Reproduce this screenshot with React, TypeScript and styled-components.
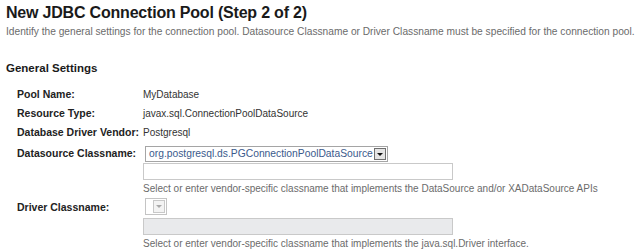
import React from "react";
import styled, { createGlobalStyle } from "styled-components";

const Global = createGlobalStyle`
  html, body { margin: 0; padding: 0; background: #fff; }
  body { font-family: "Liberation Sans", Arial, sans-serif; }
`;

const Page = styled.div`
  padding: 3px 6px 0 6px;
  width: 640px;
  box-sizing: border-box;
`;

const Title = styled.h1`
  margin: 0;
  font-size: 16px;
  letter-spacing: -0.2px;
  font-weight: bold;
  line-height: 20px;
  color: #1a1a1a;
`;

const Intro = styled.div`
  margin-top: 2px;
  font-size: 10.2px;
  line-height: 14px;
  color: #6b6b6b;
  white-space: nowrap;
`;

const Section = styled.h2`
  margin: 22px 0 0 0;
  font-size: 11.5px;
  font-weight: bold;
  line-height: 14px;
  color: #1a1a1a;
`;

const Rows = styled.div`
  margin-top: 10px;
  padding-left: 11px;
  display: flex;
  flex-direction: column;
`;

const Row = styled.div<{ $pad?: number }>`
  display: flex;
  align-items: flex-start;
  padding-top: ${(p) => p.$pad ?? 0}px;
`;

const Label = styled.div<{ $shift?: number }>`
  width: 126px;
  flex: none;
  font-size: 10.5px;
  font-weight: bold;
  line-height: 19px;
  color: #222;
  white-space: nowrap;
  margin-top: ${(p) => p.$shift ?? 0}px;
`;

const Value = styled.div`
  font-size: 10px;
  line-height: 19px;
  color: #333;
`;

const Field = styled.div`
  display: flex;
  flex-direction: column;
  align-items: flex-start;
`;

const Select = styled.div<{ $w: number; $h?: number; $disabled?: boolean }>`
  width: ${(p) => p.$w}px;
  height: ${(p) => p.$h ?? 16}px;
  box-sizing: border-box;
  border: 1px solid ${(p) => (p.$disabled ? "#c4c4c4" : "#a5a5a5")};
  background: #fff;
  display: flex;
  align-items: stretch;
  margin-left: 2px;
`;

const SelectText = styled.div`
  flex: 1;
  font-size: 10.3px;
  line-height: 14px;
  color: #3b5a8c;
  padding-left: 3px;
  white-space: nowrap;
  overflow: hidden;
`;

const Arrow = styled.div<{ $disabled?: boolean }>`
  width: 12px;
  margin: 1px;
  box-sizing: border-box;
  border: 1px solid ${(p) => (p.$disabled ? "#c8c8c8" : "#6f6f6f")};
  background: ${(p) => (p.$disabled ? "#f3f3f3" : "#e4e4e4")};
  display: flex;
  align-items: center;
  justify-content: center;
  &::after {
    content: "";
    width: 0;
    height: 0;
    border-left: 3px solid transparent;
    border-right: 3px solid transparent;
    border-top: 3px solid ${(p) => (p.$disabled ? "#a9a9a9" : "#111")};
  }
`;

const TextBox = styled.div<{ $disabled?: boolean; $gap?: number }>`
  width: 310px;
  height: 17px;
  box-sizing: border-box;
  margin-top: ${(p) => p.$gap ?? 1}px;
  border: 1px solid #c9c9c9;
  background: ${(p) => (p.$disabled ? "#e9eaec" : "#fff")};
`;

const Help = styled.div`
  font-size: 10px;
  line-height: 14px;
  margin-top: 2px;
  color: #6b6b6b;
  white-space: nowrap;
`;

export default function App() {
  return (
    <>
      <Global />
      <Page>
        <Title>New JDBC Connection Pool (Step 2 of 2)</Title>
        <Intro>
          Identify the general settings for the connection pool. Datasource Classname or Driver
          Classname must be specified for the connection pool.
        </Intro>
        <Section>General Settings</Section>
        <Rows>
          <Row>
            <Label>Pool Name:</Label>
            <Value>MyDatabase</Value>
          </Row>
          <Row>
            <Label>Resource Type:</Label>
            <Value>javax.sql.ConnectionPoolDataSource</Value>
          </Row>
          <Row>
            <Label>Database Driver Vendor:</Label>
            <Value>Postgresql</Value>
          </Row>
          <Row $pad={4}>
            <Label $shift={-2}>Datasource Classname:</Label>
            <Field>
              <Select $w={243}>
                <SelectText>org.postgresql.ds.PGConnectionPoolDataSource</SelectText>
                <Arrow />
              </Select>
              <TextBox />
              <Help>
                Select or enter vendor-specific classname that implements the DataSource and/or
                XADataSource APIs
              </Help>
            </Field>
          </Row>
          <Row $pad={2}>
            <Label>Driver Classname:</Label>
            <Field>
              <Select $w={22} $h={17} $disabled>
                <SelectText />
                <Arrow $disabled />
              </Select>
              <TextBox $disabled $gap={3} />
              <Help>Select or enter vendor-specific classname that implements the java.sql.Driver interface.</Help>
            </Field>
          </Row>
        </Rows>
      </Page>
    </>
  );
}
